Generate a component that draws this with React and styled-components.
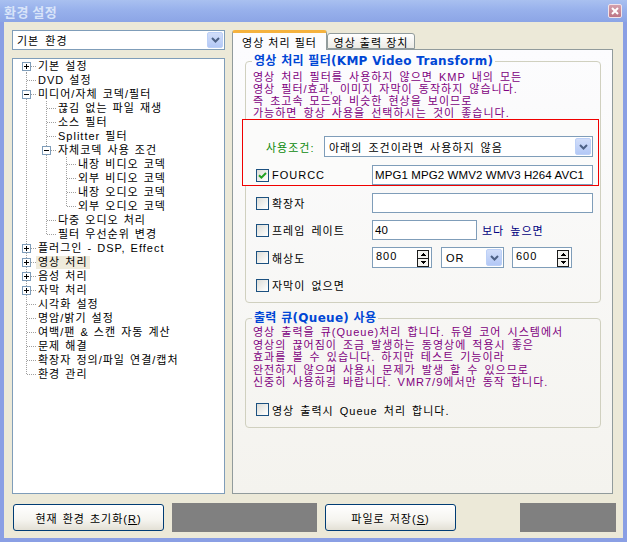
import React from 'react';
import styled, { createGlobalStyle } from 'styled-components';

const GlobalStyle = createGlobalStyle`
  html, body { margin: 0; padding: 0; }
  body {
    width: 627px;
    height: 542px;
    overflow: hidden;
    font-family: "Liberation Sans", "Noto Sans CJK KR", sans-serif;
    font-size: 11px;
    letter-spacing: 1px;
    word-spacing: 2px;
    color: #000;
  }
  * { box-sizing: border-box; }
`;

const Window = styled.div`
  width: 627px;
  height: 542px;
  display: flex;
  flex-direction: column;
  background: #8a9fe4;
`;

const TitleBar = styled.div`
  height: 22px;
  flex: none;
  display: flex;
  align-items: center;
  justify-content: space-between;
  padding: 0 5px 0 4px;
  background: linear-gradient(#a9c0f0 0%, #98b1ec 45%, #8ca5e6 100%);
`;

const TitleText = styled.span`
  font-family: "Noto Sans CJK KR", sans-serif;
  font-weight: bold;
  font-size: 13px;
  color: #d9e4f9;
  letter-spacing: 0.5px;
  word-spacing: 0;
`;

const CloseBtn = styled.div`
  width: 14px;
  height: 14px;
  display: flex;
  align-items: center;
  justify-content: center;
  border: 1px solid #f1e3ea;
  border-radius: 2px;
  background: linear-gradient(#d3a0ac, #bd7585);
`;

const Body = styled.div`
  flex: 1;
  margin: 0 4px 4px;
  padding: 8px 7px 6px 8px;
  background: #ece9d8;
  display: flex;
  flex-direction: column;
`;

const Main = styled.div`
  height: 464px;
  display: flex;
  gap: 7px;
`;

const LeftCol = styled.div`
  width: 213px;
  display: flex;
  flex-direction: column;
  gap: 8px;
`;

const RightCol = styled.div`
  width: 381px;
  display: flex;
  flex-direction: column;
`;

const Combo = styled.div`
  height: ${p => p.$h || 20}px;
  width: ${p => (p.$w ? `${p.$w}px` : 'auto')};
  display: flex;
  align-items: center;
  justify-content: space-between;
  border: 1px solid #7f9db9;
  background: #fff;
  padding: 1px 1px 1px 4px;
  white-space: nowrap;
`;

const DropBtn = styled.div`
  width: 16px;
  height: 100%;
  flex: none;
  display: flex;
  align-items: center;
  justify-content: center;
  border-radius: 2px;
  border: 1px solid #bcd0f7;
  background: linear-gradient(#d2def9, #b3c8f6);
`;

const Tree = styled.div`
  flex: 1;
  background: #fff;
  border: 1px solid #7f9db9;
  padding: 0 0 0 3px;
  word-spacing: 1px;
`;

const TreeRow = styled.div`
  height: 14px;
  display: flex;
  align-items: center;
`;

const TreeLabel = styled.span`
  height: 13px;
  line-height: 13px;
  padding: 0 2px;
  white-space: nowrap;
  background: ${p => (p.$selected ? '#efebdc' : 'transparent')};
`;

const TabStrip = styled.div`
  height: 19px;
  display: flex;
  align-items: flex-end;
  position: relative;
  z-index: 1;
  word-spacing: 0;
`;

const Tab = styled.div`
  width: ${p => p.$w}px;
  height: ${p => (p.$active ? 20 : 16)}px;
  margin-bottom: ${p => (p.$active ? -1 : 0)}px;
  display: flex;
  align-items: center;
  justify-content: center;
  border: 1px solid #919b9c;
  border-bottom: ${p => (p.$active ? 'none' : '1px solid #919b9c')};
  border-top: ${p => (p.$active ? '3px solid #f5b23e' : '1px solid #919b9c')};
  border-radius: 3px 3px 0 0;
  background: ${p => (p.$active ? '#fcfcfe' : 'linear-gradient(#ffffff, #ecebe6)')};
  padding-top: ${p => (p.$active ? 0 : 1)}px;
  white-space: nowrap;
`;

const Panel = styled.div`
  flex: 1;
  border: 1px solid #919b9c;
  background: linear-gradient(#fcfcfe, #f4f3ee);
  padding: 4px 11px 0 12px;
`;

const Group = styled.fieldset`
  margin: ${p => p.$mt || 0}px 0 0;
  padding: 0 0 7px;
  border: 1px solid #d0d0bf;
  border-radius: 4px;
  min-width: 0;
`;

const Legend = styled.legend`
  margin-left: 6px;
  padding: 0 2px;
  line-height: 14px;
  font-weight: bold;
  color: #0046d5;
  font-family: "DejaVu Sans", "Noto Sans CJK KR", sans-serif;
  font-size: 12px;
  letter-spacing: 0.3px;
  word-spacing: 0;
`;

const Desc = styled.div`
  padding: ${p => p.$pt}px 0 0 7px;
  color: #800080;
  line-height: ${p => p.$lh}px;
  white-space: nowrap;
`;

const RedBox = styled.div`
  position: relative;
  height: 67px;
  margin: 0 1px 0 -4px;
  padding: 16px 5px 0 0;
  border: 1px solid #f00000;
  background: #fbfbfa;
  display: flex;
  flex-direction: column;
  gap: 8px;
`;

const Row = styled.div`
  height: ${p => p.$h || 20}px;
  margin-top: ${p => p.$mt || 0}px;
  padding-left: ${p => p.$pl}px;
  display: flex;
  align-items: center;
`;

const CondLabel = styled.span`
  width: 58px;
  color: #0c8a0c;
`;

const CheckLabel = styled.label`
  width: ${p => (p.$w ? `${p.$w}px` : 'auto')};
  flex: none;
  display: flex;
  align-items: center;
  gap: 3px;
  white-space: nowrap;
`;

const CheckBox = styled.span`
  width: 13px;
  height: 13px;
  flex: none;
  display: flex;
  align-items: center;
  justify-content: center;
  border: 1px solid #1c5180;
  background: linear-gradient(135deg, #dcdcd7 0%, #fafaf8 80%, #ffffff 100%);
`;

const TextBox = styled.input`
  width: ${p => p.$w}px;
  height: 20px;
  border: 1px solid #7f9db9;
  background: #fff;
  padding: 0 2px;
  font-family: "Liberation Sans", "Noto Sans CJK KR", sans-serif;
  font-size: 11.5px;
  letter-spacing: 0.1px;
  color: #000;
  outline: none;
`;

const Note = styled.span`
  margin-left: 5px;
  color: #000080;
`;

const Spin = styled.div`
  width: 60px;
  height: 21px;
  margin: 0 ${p => p.$mr || 0}px 0 ${p => p.$ml || 0}px;
  display: flex;
  align-items: flex-start;
  justify-content: space-between;
  border: 1px solid #7f9db9;
  background: #fff;
  padding: 1px 2px 0 3px;
  line-height: 14px;
`;

const Footer = styled.div`
  height: 29px;
  margin-top: 9px;
  padding-left: 1px;
  display: flex;
  align-items: center;
  gap: 8px;
`;

const Button = styled.button`
  width: ${p => p.$w}px;
  height: 27px;
  border: 1px solid #003c74;
  border-radius: 3px;
  background: linear-gradient(#ffffff 0%, #f5f4ef 60%, #e3e0d5 100%);
  font-family: "Liberation Sans", "Noto Sans CJK KR", sans-serif;
  font-size: 11px;
  letter-spacing: 1px;
  word-spacing: 1px;
  color: #000;
  padding: 0;
  u { text-decoration: underline; }
`;

const GrayBlock = styled.div`
  width: ${p => p.$w}px;
  height: 29px;
  margin-left: ${p => (p.$push ? 'auto' : '0')};
  background: #808080;
`;

const TREE = [
  [0, '기본 설정', 'plus'],
  [0, 'DVD 설정'],
  [0, '미디어/자체 코덱/필터', 'minus'],
  [1, '끊김 없는 파일 재생'],
  [1, '소스 필터'],
  [1, 'Splitter 필터'],
  [1, '자체코덱 사용 조건', 'minus'],
  [2, '내장 비디오 코덱'],
  [2, '외부 비디오 코덱'],
  [2, '내장 오디오 코덱'],
  [2, '외부 오디오 코덱'],
  [1, '다중 오디오 처리'],
  [1, '필터 우선순위 변경'],
  [0, '플러그인 - DSP, Effect', 'plus'],
  [0, '영상 처리', 'plus', true],
  [0, '음성 처리', 'plus'],
  [0, '자막 처리', 'plus'],
  [0, '시각화 설정'],
  [0, '명암/밝기 설정'],
  [0, '여백/팬 & 스캔 자동 계산'],
  [0, '문제 해결'],
  [0, '확장자 정의/파일 연결/캡처'],
  [0, '환경 관리'],
];

const isLast = (lv, idx) => {
  for (let j = idx + 1; j < TREE.length; j++) {
    if (TREE[j][0] < lv) return true;
    if (TREE[j][0] === lv) return false;
  }
  return true;
};

const rows = TREE.map(([level, label, exp, sel], i) => {
  const guides = [];
  for (let k = 0; k < level; k++) {
    let a = i;
    while (TREE[a][0] !== k) a--;
    guides.push(!isLast(k, a));
  }
  return { level, label, exp, sel, last: isLast(level, i), first: i === 0, guides };
});

const LINE = { stroke: '#a0a0a0', strokeDasharray: '1 1', shapeRendering: 'crispEdges' };

const Guide = ({ on }) => (
  <svg width="20" height="14" style={{ flex: 'none' }}>
    {on && <line x1="10.5" y1="0" x2="10.5" y2="14" {...LINE} />}
  </svg>
);

const Elbow = ({ first, last, exp }) => (
  <svg width="20" height="14" style={{ flex: 'none' }}>
    <line x1="10.5" y1={first ? 7 : 0} x2="10.5" y2={last ? 7 : 14} {...LINE} />
    <line x1="11" y1="7.5" x2="20" y2="7.5" {...LINE} />
    {exp && (
      <g shapeRendering="crispEdges">
        <rect x="6.5" y="3.5" width="8" height="8" fill="#fff" stroke="#7f9db9" />
        <line x1="8" y1="7.5" x2="13" y2="7.5" stroke="#000" />
        {exp === 'plus' && <line x1="10.5" y1="5" x2="10.5" y2="10" stroke="#000" />}
      </g>
    )}
  </svg>
);

const Chevron = () => (
  <svg width="9" height="6" viewBox="0 0 9 6">
    <path d="M1 1 L4.5 4.5 L8 1" stroke="#4d6185" strokeWidth="2" fill="none" />
  </svg>
);

const SpinArrows = () => (
  <svg width="12" height="17" viewBox="0 0 12 17" style={{ flex: 'none', marginTop: 1 }} shapeRendering="crispEdges">
    <rect x="0.5" y="0.5" width="11" height="16" fill="#f4f4f0" stroke="#1c1c1c" />
    <line x1="0" y1="8.5" x2="12" y2="8.5" stroke="#1c1c1c" />
    <path d="M3 6 L6 3 L9 6 Z" fill="#000" />
    <path d="M3 11 L9 11 L6 14 Z" fill="#000" />
  </svg>
);

const Check = ({ checked }) => (
  <CheckBox>
    {checked && (
      <svg width="9" height="9" viewBox="0 0 9 9">
        <path d="M1 4.2 L3.4 6.6 L8 2" stroke="#21a121" strokeWidth="2" fill="none" />
      </svg>
    )}
  </CheckBox>
);

export default function App() {
  return (
    <Window>
      <GlobalStyle />
      <TitleBar>
        <TitleText>환경 설정</TitleText>
        <CloseBtn>
          <svg width="8" height="8" viewBox="0 0 8 8">
            <path d="M1 1 L7 7 M7 1 L1 7" stroke="#fff" strokeWidth="2" />
          </svg>
        </CloseBtn>
      </TitleBar>
      <Body>
        <Main>
          <LeftCol>
            <Combo>
              <span>기본 환경</span>
              <DropBtn><Chevron /></DropBtn>
            </Combo>
            <Tree>
              {rows.map((r, i) => (
                <TreeRow key={i}>
                  {r.guides.map((g, k) => <Guide key={k} on={g} />)}
                  <Elbow first={r.first} last={r.last} exp={r.exp} />
                  <TreeLabel $selected={r.sel}>{r.label}</TreeLabel>
                </TreeRow>
              ))}
            </Tree>
          </LeftCol>
          <RightCol>
            <TabStrip>
              <Tab $active $w={95}>영상 처리 필터</Tab>
              <Tab $w={88}>영상 출력 장치</Tab>
            </TabStrip>
            <Panel>
              <Group>
                <Legend>영상 처리 필터(KMP Video Transform)</Legend>
                <Desc $pt={3} $lh={12}>
                  영상 처리 필터를 사용하지 않으면 KMP 내의 모든<br />
                  영상 필터/효과, 이미지 자막이 동작하지 않습니다.<br />
                  즉 초고속 모드와 비슷한 현상을 보이므로<br />
                  가능하면 항상 사용을 선택하시는 것이 좋습니다.
                </Desc>
                <RedBox>
                  <Row $pl={23} $h={21}>
                    <CondLabel>사용조건:</CondLabel>
                    <Combo $w={269} $h={21}>
                      <span>아래의 조건이라면 사용하지 않음</span>
                      <DropBtn><Chevron /></DropBtn>
                    </Combo>
                  </Row>
                  <Row $pl={13}>
                    <CheckLabel $w={116}><Check checked />FOURCC</CheckLabel>
                    <TextBox $w={221} readOnly value="MPG1 MPG2 WMV2 WMV3 H264 AVC1" />
                  </Row>
                </RedBox>
                <Row $pl={10} $mt={7}>
                  <CheckLabel $w={116}><Check />확장자</CheckLabel>
                  <TextBox $w={221} readOnly value="" />
                </Row>
                <Row $pl={10} $mt={7}>
                  <CheckLabel $w={116}><Check />프레임 레이트</CheckLabel>
                  <TextBox $w={105} readOnly value="40" />
                  <Note>보다 높으면</Note>
                </Row>
                <Row $pl={10} $mt={7} $h={21}>
                  <CheckLabel $w={116}><Check />해상도</CheckLabel>
                  <Spin $mr={9}><span>800</span><SpinArrows /></Spin>
                  <Combo $w={63} $h={21}>
                    <span>OR</span>
                    <DropBtn><Chevron /></DropBtn>
                  </Combo>
                  <Spin $ml={8}><span>600</span><SpinArrows /></Spin>
                </Row>
                <Row $pl={10} $mt={7}>
                  <CheckLabel><Check />자막이 없으면</CheckLabel>
                </Row>
              </Group>
              <Group $mt={8}>
                <Legend>출력 큐(Queue) 사용</Legend>
                <Desc $pt={1} $lh={12.6}>
                  영상 출력을 큐(Queue)처리 합니다. 듀얼 코어 시스템에서<br />
                  영상의 끊어짐이 조금 발생하는 동영상에 적용시 좋은<br />
                  효과를 볼 수 있습니다. 하지만 테스트 기능이라<br />
                  완전하지 않으며 사용시 문제가 발생 할 수 있으므로<br />
                  신중히 사용하길 바랍니다. VMR7/9에서만 동작 합니다.
                </Desc>
                <Row $pl={10} $mt={11}>
                  <CheckLabel><Check />영상 출력시 Queue 처리 합니다.</CheckLabel>
                </Row>
              </Group>
            </Panel>
          </RightCol>
        </Main>
        <Footer>
          <Button $w={151}>현재 환경 초기화(<u>R</u>)</Button>
          <GrayBlock $w={145} />
          <Button $w={131}>파일로 저장(<u>S</u>)</Button>
          <GrayBlock $w={96} $push />
        </Footer>
      </Body>
    </Window>
  );
}
